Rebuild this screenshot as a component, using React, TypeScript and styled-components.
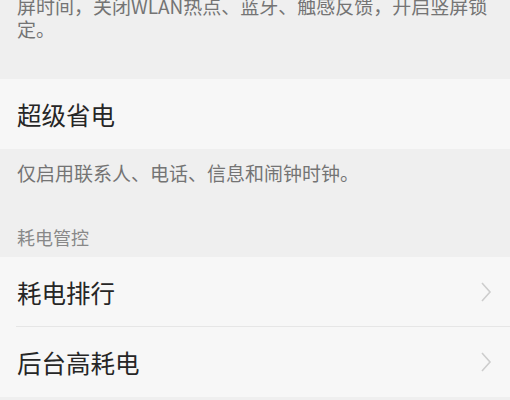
import React from "react";
import styled, { createGlobalStyle } from "styled-components";

const GlobalStyle = createGlobalStyle`
	html, body {
		margin: 0;
		padding: 0;
		background: #efefef;
		font-family: "Noto Sans CJK SC", "Noto Sans", sans-serif;
		overflow: hidden;
	}
`;

const Page = styled.div`
	width: 510px;
	height: 400px;
	overflow: hidden;
	background: #efefef;
`;

const Section = styled.div<{ pt: number; pb: number }>`
	padding: ${(p) => p.pt}px 18px ${(p) => p.pb}px 17px;
`;

const Desc = styled.p<{ shift?: number }>`
	margin: ${(p) => (p.shift ? -p.shift : 0)}px 0 0;
	font-size: 19px;
	line-height: 23px;
	color: #747474;
`;

const Label = styled.div`
	margin-top: 42px;
	font-size: 18px;
	line-height: 23px;
	color: #888888;
`;

const Group = styled.div`
	background: #f7f7f7;
`;

const Row = styled.div<{ divider?: boolean }>`
	position: relative;
	height: 70px;
	display: flex;
	align-items: center;
	justify-content: space-between;
	padding: 0 18px 0 17px;
	&::after {
		content: "";
		display: ${(p) => (p.divider ? "block" : "none")};
		position: absolute;
		left: 16px;
		right: 0;
		bottom: 0;
		height: 1px;
		background: #e6e6e6;
	}
`;

const Title = styled.span`
	font-size: 24.5px;
	color: #262626;
`;

const Chevron = () => (
	<svg width="12" height="22" viewBox="0 0 12 22">
		<polyline points="2,2 10,11 2,20" fill="none" stroke="#cdcdcd" strokeWidth="1.6" />
	</svg>
);

export default function App() {
	return (
		<>
			<GlobalStyle />
			<Page>
				<Section pt={0} pb={39}>
					<Desc shift={6}>
						屏时间，关闭WLAN热点、蓝牙、触感反馈，开启竖屏锁定。
					</Desc>
				</Section>
				<Group>
					<Row>
						<Title>超级省电</Title>
					</Row>
				</Group>
				<Section pt={12} pb={8}>
					<Desc>仅启用联系人、电话、信息和闹钟时钟。</Desc>
					<Label>耗电管控</Label>
				</Section>
				<Group>
					<Row divider>
						<Title>耗电排行</Title>
						<Chevron />
					</Row>
					<Row>
						<Title>后台高耗电</Title>
						<Chevron />
					</Row>
				</Group>
			</Page>
		</>
	);
}
